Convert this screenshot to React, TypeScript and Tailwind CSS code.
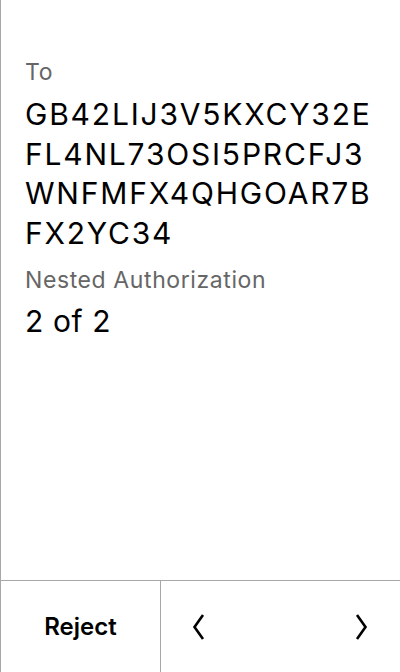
export default function App() {
  return (
    <div
      className="flex h-[672px] w-[400px] flex-col border-l border-[#a8a8a8] bg-white text-black"
      style={{ fontFamily: "Inter, 'Noto Sans', sans-serif" }}
    >
      {/* Details */}
      <div className="flex-1 pl-6 pr-4 pt-[57px]">
        <p className="text-[23px] leading-[30px] tracking-[0.6px] text-[#666]">To</p>
        <p className="mt-[8px] break-all text-[30px] leading-[39.5px] tracking-[1.8px]">
          GB42LIJ3V5KXCY32EFL4NL73OSI5PRCFJ3WNFMFX4QHGOAR7BFX2YC34
        </p>
        <p className="mt-[12px] text-[23px] leading-[30px] tracking-[0.6px] text-[#666]">
          Nested Authorization
        </p>
        <p className="mt-[8px] text-[30px] leading-[36px] tracking-[0.6px]">2 of 2</p>
      </div>

      {/* Actions */}
      <div className="flex h-[92px] border-t border-[#a8a8a8]">
        <button className="flex w-[159px] items-center justify-center text-[24px] font-semibold">
          Reject
        </button>
        <div className="flex flex-1 items-center justify-between border-l border-[#a8a8a8] pl-[31px] pr-[32px]">
          <svg width="13" height="26" viewBox="0 0 13 26" fill="none" stroke="black" strokeWidth="2.6">
            <path d="M11 1 L2.5 13 L11 25" />
          </svg>
          <svg width="13" height="26" viewBox="0 0 13 26" fill="none" stroke="black" strokeWidth="2.6">
            <path d="M2 1 L10.5 13 L2 25" />
          </svg>
        </div>
      </div>
    </div>
  )
}
